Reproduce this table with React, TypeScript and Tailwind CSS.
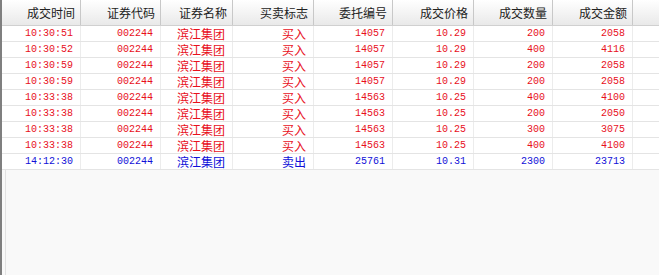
import React from 'react';

const cols = [
  { title: '成交时间', w: 'w-[79px]' },
  { title: '证券代码', w: 'w-[80px]' },
  { title: '证券名称', w: 'w-[72px]' },
  { title: '买卖标志', w: 'w-[81px]' },
  { title: '委托编号', w: 'w-[79px]' },
  { title: '成交价格', w: 'w-[81px]' },
  { title: '成交数量', w: 'w-[79px]' },
  { title: '成交金额', w: 'w-[80px]' },
];

const rows = [
  ['10:30:51', '002244', '滨江集团', '买入', '14057', '10.29', '200', '2058'],
  ['10:30:52', '002244', '滨江集团', '买入', '14057', '10.29', '400', '4116'],
  ['10:30:59', '002244', '滨江集团', '买入', '14057', '10.29', '200', '2058'],
  ['10:30:59', '002244', '滨江集团', '买入', '14057', '10.29', '200', '2058'],
  ['10:33:38', '002244', '滨江集团', '买入', '14563', '10.25', '400', '4100'],
  ['10:33:38', '002244', '滨江集团', '买入', '14563', '10.25', '200', '2050'],
  ['10:33:38', '002244', '滨江集团', '买入', '14563', '10.25', '300', '3075'],
  ['10:33:38', '002244', '滨江集团', '买入', '14563', '10.25', '400', '4100'],
  ['14:12:30', '002244', '滨江集团', '卖出', '25761', '10.31', '2300', '23713'],
];

const cn = "font-['Noto_Sans_CJK_SC',sans-serif]";
const mono = "font-['Liberation_Mono','Noto_Sans_CJK_SC',monospace]";

export default function App() {
  return (
    <div className="w-[659px] h-[275px] flex bg-white overflow-hidden">
      <div className="w-[2px] bg-[#7f7f7f]" />
      <div className="flex-1 flex flex-col">
        <div className="h-[26px] flex border-b border-[#d0d0d0] bg-gradient-to-b from-white via-[#f4f4f4] to-[#e9e9e9]">
          {cols.map((c) => (
            <div
              key={c.title}
              className={`${c.w} shrink-0 flex items-center justify-end pr-[5px] border-r border-[#c8c8c8] text-[12px] text-[#222] ${cn}`}
            >
              {c.title}
            </div>
          ))}
          <div className="flex-1" />
        </div>
        {rows.map((r, i) => {
          const color = r[3] === '卖出' ? 'text-[#1010d8]' : 'text-[#e8101c]';
          return (
            <div key={i} className={`h-[16px] flex border-b border-[#e4e4e4] ${color}`}>
              {r.map((v, j) => (
                <div
                  key={j}
                  className={`${cols[j].w} shrink-0 flex items-center justify-end pr-[7px] border-r border-[#ececec] leading-none ${
                    j === 2 || j === 3 ? `text-[12px] ${cn}` : `text-[10px] ${mono}`
                  }`}
                >
                  {v}
                </div>
              ))}
              <div className="flex-1" />
            </div>
          );
        })}
        <div className="flex-1 flex bg-[#f9f9f9]">
          <div className="w-[4px] border-r border-[#e2e2e2]" />
        </div>
      </div>
    </div>
  );
}
